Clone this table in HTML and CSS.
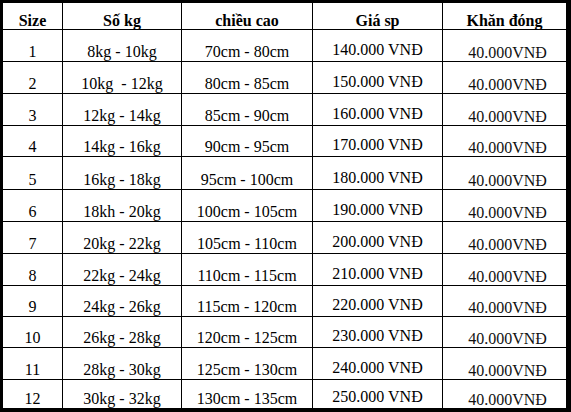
FILE: index.html
```html
<!DOCTYPE html>
<html lang="vi">
<head>
<meta charset="utf-8">
<title>Bảng size</title>
<link rel="stylesheet" href="styles.css">
</head>
<body>
<div class="sizes">
  <div class="cell head">Size</div><div class="cell head">Số kg</div><div class="cell head">chiều cao</div><div class="cell head">Giá sp</div><div class="cell head">Khăn đóng</div>
  <div class="cell">1</div><div class="cell">8kg - 10kg</div><div class="cell">70cm - 80cm</div><div class="cell">140.000 VNĐ</div><div class="cell">40.000VNĐ</div>
  <div class="cell">2</div><div class="cell">10kg  - 12kg</div><div class="cell">80cm - 85cm</div><div class="cell">150.000 VNĐ</div><div class="cell">40.000VNĐ</div>
  <div class="cell">3</div><div class="cell">12kg - 14kg</div><div class="cell">85cm - 90cm</div><div class="cell">160.000 VNĐ</div><div class="cell">40.000VNĐ</div>
  <div class="cell">4</div><div class="cell">14kg - 16kg</div><div class="cell">90cm - 95cm</div><div class="cell">170.000 VNĐ</div><div class="cell">40.000VNĐ</div>
  <div class="cell">5</div><div class="cell">16kg - 18kg</div><div class="cell">95cm - 100cm</div><div class="cell">180.000 VNĐ</div><div class="cell">40.000VNĐ</div>
  <div class="cell">6</div><div class="cell">18kh - 20kg</div><div class="cell">100cm - 105cm</div><div class="cell">190.000 VNĐ</div><div class="cell">40.000VNĐ</div>
  <div class="cell">7</div><div class="cell">20kg - 22kg</div><div class="cell">105cm - 110cm</div><div class="cell">200.000 VNĐ</div><div class="cell">40.000VNĐ</div>
  <div class="cell">8</div><div class="cell">22kg - 24kg</div><div class="cell">110cm - 115cm</div><div class="cell">210.000 VNĐ</div><div class="cell">40.000VNĐ</div>
  <div class="cell">9</div><div class="cell">24kg - 26kg</div><div class="cell">115cm - 120cm</div><div class="cell">220.000 VNĐ</div><div class="cell">40.000VNĐ</div>
  <div class="cell">10</div><div class="cell">26kg - 28kg</div><div class="cell">120cm - 125cm</div><div class="cell">230.000 VNĐ</div><div class="cell">40.000VNĐ</div>
  <div class="cell">11</div><div class="cell">28kg - 30kg</div><div class="cell">125cm - 130cm</div><div class="cell">240.000 VNĐ</div><div class="cell">40.000VNĐ</div>
  <div class="cell">12</div><div class="cell">30kg - 32kg</div><div class="cell">130cm - 135cm</div><div class="cell">250.000 VNĐ</div><div class="cell">40.000VNĐ</div>
</div>
</body>
</html>
```
FILE: styles.css
```css
html, body {
  margin: 0;
  padding: 0;
  background: #fff;
}

.sizes {
  display: grid;
  grid-template-columns: 60px 119px 131px 130px 123px;
  grid-template-rows: 27px 32px 32px 32px 31px 33px 32px 32px 32px 31px 31px 32px 28px;
  width: 571px;
  height: 412px;
  box-sizing: border-box;
  border-style: solid;
  border-color: #000;
  border-width: 3px 5px 4px 3px;
  font-family: "Liberation Serif", "Times New Roman", serif;
  font-size: 16px;
  color: #000;
}

.cell {
  display: flex;
  align-items: flex-end;
  justify-content: center;
  border-right: 1px solid #000;
  border-bottom: 1px solid #000;
  line-height: 16px;
  padding-bottom: 1.5px;
  white-space: pre;
  overflow: visible;
}

.cell:nth-child(5n+4) {
  padding-bottom: 3.5px;
}

.cell:nth-child(5n) {
  border-right: 0;
  padding-bottom: 0.5px;
  padding-left: 6px;
  color: #111;
}

.cell:nth-last-child(-n+5) {
  border-bottom: 0;
}

.cell.head {
  font-weight: bold;
  padding-bottom: 0;
  padding-left: 0;
  color: #000;
}
```
